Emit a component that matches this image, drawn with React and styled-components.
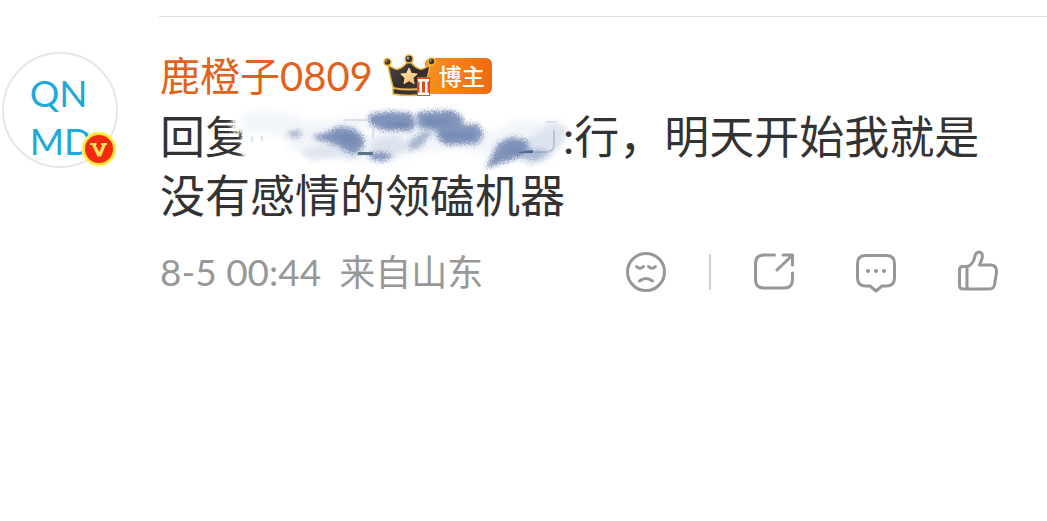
import React from "react";
import styled, { createGlobalStyle } from "styled-components";

const App = () => {
  return (
    <>
      <GlobalStyle />
      <Page>
        <Separator />
        <Comment>
          <AvatarLink href="#profile" aria-label="鹿橙子0809">
            <AvatarText>
              QN
              <br />
              MD
            </AvatarText>
            <VerifiedIcon />
          </AvatarLink>
          <Content>
            <Header>
              <UserName href="#profile">鹿橙子0809</UserName>
              <Badge>
                <CrownIcon />
                <BadgeLabel>博主</BadgeLabel>
              </Badge>
            </Header>
            <Message>
              回复
              <Smudge />
              :行，明天开始我就是没有感情的领磕机器
            </Message>
            <Footer>
              <Meta>
                <Time>8-5 00:44</Time>
                <span>来自山东</span>
              </Meta>
              <Actions>
                <IconButton type="button" aria-label="不喜欢">
                  <SadIcon />
                </IconButton>
                <ActionDivider />
                <ButtonGroup>
                  <IconButton type="button" aria-label="转发">
                    <ShareIcon />
                  </IconButton>
                  <IconButton type="button" aria-label="评论">
                    <CommentIcon />
                  </IconButton>
                  <IconButton type="button" aria-label="赞">
                    <LikeIcon />
                  </IconButton>
                </ButtonGroup>
              </Actions>
            </Footer>
          </Content>
        </Comment>
      </Page>
    </>
  );
};

const VerifiedIcon = () => (
  <VerifiedSvg viewBox="0 0 36 36" aria-hidden="true">
    <circle cx="18" cy="18" r="17.5" fill="#fff27a" />
    <circle cx="18" cy="18" r="16" fill="#ffe531" />
    <circle cx="18" cy="18" r="14" fill="#f42a0c" />
    <path
      d="M9 12h6.500v2h-1l3.800 7 3-7h-1.300v-2h6v2h-1.200L20 25.500h-3.500L11 14H9z"
      fill="#ffe45c"
    />
  </VerifiedSvg>
);

const CrownIcon = () => (
  <CrownSvg viewBox="0 0 54 44" aria-hidden="true">
    <defs>
      <linearGradient id="crown" x1="0" y1="0" x2="1" y2="1">
        <stop offset="0" stopColor="#55504b" />
        <stop offset="0.5" stopColor="#302c2b" />
        <stop offset="1" stopColor="#4b4441" />
      </linearGradient>
      <linearGradient id="star" x1="0" y1="0" x2="1" y2="1">
        <stop offset="0" stopColor="#fff3cf" />
        <stop offset="1" stopColor="#f7b255" />
      </linearGradient>
    </defs>
    <g stroke="#f6b73f" strokeWidth="1.5" strokeLinejoin="round">
      <path
        d="M5 11c4 2 7 5 10 4 5-1 8-5 11-9 3 4 6 8 11 9 3 1 6-2 10-4-1 8-3 15-5 22v7q-16 3-32 0v-7C8 26 6 19 5 11z"
        fill="url(#crown)"
      />
      <circle cx="4.500" cy="8" r="3.500" fill="#3b3734" />
      <circle cx="26" cy="5" r="4" fill="#3b3734" />
      <circle cx="48.500" cy="7.500" r="3.500" fill="#3b3734" />
    </g>
    <path d="M10 33q16 3 32 0v2q-16 3-32 0z" fill="#efb255" />
    <g fill="#b5aba2">
      <circle cx="3.500" cy="7" r="1" />
      <circle cx="25" cy="4" r="1.200" />
      <circle cx="47.500" cy="6.500" r="1" />
    </g>
    <path
      d="m26 14 2.400 5.400 5.800.6-4.300 4 1.200 5.700-5.100-3-5.100 3 1.200-5.700-4.300-4 5.800-.6z"
      fill="url(#star)"
      stroke="#ffd38a"
      strokeLinejoin="round"
    />
    <rect x="34" y="23" width="13" height="19" rx="1" fill="#d9501f" />
    <path
      d="M35 25h11v2.500h-1.500v11H46V41H35v-2.500h1.500v-11H35zm4 2.500v11h3v-11z"
      fill="#fff"
      fillRule="evenodd"
    />
  </CrownSvg>
);

// Brushed-out user name, drawn in place of the text
const Smudge = () => (
  <SmudgeSvg viewBox="0 0 313 59" aria-hidden="true">
    <defs>
      <filter id="soft" x="-20%" y="-40%" width="140%" height="180%">
        <feGaussianBlur stdDeviation="4" />
      </filter>
      <filter
        id="brush"
        x="-20%"
        y="-40%"
        width="140%"
        height="180%"
        colorInterpolationFilters="sRGB"
      >
        <feTurbulence
          type="fractalNoise"
          baseFrequency="0.7"
          numOctaves="2"
          seed="4"
          result="noise"
        />
        <feGaussianBlur in="SourceGraphic" stdDeviation="2" result="blur" />
        <feDisplacementMap
          in="blur"
          in2="noise"
          scale="9"
          xChannelSelector="R"
          yChannelSelector="G"
        />
      </filter>
    </defs>
    <path d="M-16 2H8v52H-8V24l-11-1z" fill="#fff" filter="url(#brush)" />
    <g fill="#f1f4f9" filter="url(#soft)">
      <path d="M-8 6Q15 0 45 7l10 10-10 11Q20 25-6 24z" />
      <path d="M20 14h50l40-6 10 12-50 18-40-8z" />
      <path d="M32 38Q75 24 115 34l14-18 70 4 20 14 50-22 38 2 8 12-15 16-42 10-54-13-80 15-52-4z" />
    </g>
    <g fill="#dae1ed" filter="url(#brush)" opacity="0.8">
      <path d="M50 44q20-10 50-5l-4 9-35 4z" />
      <path d="M92 50q7-12 24-12l-4 10-13 3z" />
      <path d="M120 32l25-5 20 12-20 8-24 1z" />
      <path d="M266 40l20-16 18-10 14 6-4 14-16 18-18 6-12-8z" />
    </g>
    <g
      fill="#8195bb"
      stroke="#8195bb"
      strokeWidth="2"
      strokeLinejoin="round"
      filter="url(#brush)"
    >
      <path d="M64 29q15-3 22-9 20-2 28 12l-3 8-8 6-15-9z" />
      <path d="M119 8q14-6 42-2l4 8-4 8-29-1-11-5z" />
      <path d="M168 5l34-2 11 8-4 7-22 4-18-3z" />
      <path d="M190 18l37-1 6 9-6 9-31 1-9-8z" />
      <path d="M249 36l13-6 14 3 4 12-19 6-24 8z" />
      <path d="M119 46l14-1 9 3-8 4-11-1z" />
    </g>
    <g fill="#a9b7d1" filter="url(#brush)">
      <path d="M36 25l12-3 5 4-9 5z" />
      <path d="M160 32l14-9 10 0-8 9-6 8-12 2z" />
      <path d="M275 43l16-2 8 4-13 8-12-3z" />
    </g>
    <g fill="#6880ad" opacity="0.6" filter="url(#brush)">
      <path d="M82 27l18-1 9 7-12 2z" />
      <path d="M134 14h22l4 5-23 1z" />
      <path d="M175 11h22l4 4-21 2z" />
      <path d="M193 25h30v5h-26z" />
      <path d="M256 41l14-3 3 4-14 4z" />
    </g>
    <path d="M108 44h15v3h-15z" fill="#5b7486" />
    <path d="M269 44l14-2v3h-14z" fill="#4c6492" />
    <path
      d="M284 44h12q8 0 8-8V22"
      fill="none"
      stroke="#8494b4"
      strokeWidth="2"
      opacity="0.4"
    />
    <path
      d="M2 28v6M12 28v5M123 20v10M93 12h26M296 14h11"
      stroke="#cdd3de"
      strokeWidth="2"
      opacity="0.6"
    />
  </SmudgeSvg>
);

const SadIcon = () => (
  <Icon viewBox="0 0 40 40" aria-hidden="true">
    <circle cx="20" cy="20" r="18.500" />
    <path d="M10.500 14.500q3.500 3.500 7 0M22.500 14.500q3.500 3.500 7 0M13.500 29q6.500-5 13 0" />
  </Icon>
);

const ShareIcon = () => (
  <Icon viewBox="0 0 40 40" aria-hidden="true">
    <path d="M20.500 3H10q-8.500 0-8.500 8.500v16q0 8.500 8.500 8.500h20q8.500 0 8.500-8.500v-6.500" />
    <path d="M29 3h9.500v10M38 3.500 23 18" />
  </Icon>
);

const CommentIcon = () => (
  <Icon viewBox="0 0 40 40" aria-hidden="true">
    <path d="M9.500 3.500h21q8 0 8 8v14.500q0 8-8 8H26l-6 5-6-5H9.500q-8 0-8-8V11.500q0-8 8-8z" />
    <g fill="#979797" stroke="none">
      <circle cx="12" cy="19" r="2" />
      <circle cx="20" cy="19" r="2" />
      <circle cx="28" cy="19" r="2" />
    </g>
  </Icon>
);

const LikeIcon = () => (
  <Icon viewBox="0 0 40 40" aria-hidden="true">
    <path d="M9 14.500H5q-3.500 0-3.500 3.500v15.500q0 3.500 3.500 3.500h26.500q4 0 5-4l2-12.500q.5-7-5-7.500H21.500l2.500-6.500q1.500-6-3-6.500-3 0-4 4-2 9.500-8 10.500zV37" />
  </Icon>
);

const GlobalStyle = createGlobalStyle`
  * {
    box-sizing: border-box;
  }

  body {
    margin: 0;
    background-color: #fff;
    font-family: Lato, "Noto Sans CJK SC", sans-serif;
  }
`;

const Page = styled.main`
  padding-top: 16px;
`;

const Separator = styled.hr`
  height: 1px;
  margin: 0 0 0 159px;
  border: 0;
  background-color: #dcdcdc;
`;

const Comment = styled.article`
  display: flex;
  align-items: flex-start;
  gap: 42px;
  padding: 35px 49px 24px 2px;
`;

const AvatarLink = styled.a`
  position: relative;
  display: flex;
  flex: none;
  align-items: center;
  justify-content: center;
  width: 116px;
  height: 116px;
  border: 2px solid #e6e6e6;
  border-radius: 50%;
  color: #1ea9d8;
  text-decoration: none;
`;

const AvatarText = styled.span`
  padding: 14px 0 0 2px;
  font-size: 37px;
  line-height: 48px;
`;

const VerifiedSvg = styled.svg`
  position: absolute;
  right: -1px;
  bottom: -1px;
  width: 36px;
  height: 36px;
`;

const Content = styled.div`
  flex: 1;
  min-width: 0;
`;

const Header = styled.header`
  display: flex;
  align-items: center;
  gap: 10px;
  padding-top: 2px;
`;

const UserName = styled.a`
  color: #e0621c;
  font-size: 40px;
  line-height: 44px;
  text-decoration: none;
`;

const Badge = styled.span`
  display: flex;
  align-items: center;
`;

const CrownSvg = styled.svg`
  z-index: 1;
  width: 54px;
  height: 44px;
`;

const BadgeLabel = styled.span`
  margin-left: -12px;
  padding: 0 7px 0 14px;
  border-radius: 6px;
  background: linear-gradient(90deg, #f5921f, #f26a0c);
  color: #fff;
  font-size: 23px;
  font-weight: 500;
  line-height: 36px;
`;

const Message = styled.p`
  margin: 10px 0 0;
  color: #333;
  font-size: 45px;
  line-height: 59px;
`;

const SmudgeSvg = styled.svg`
  width: 313px;
  height: 59px;
  overflow: visible;
  vertical-align: top;
`;

const Footer = styled.footer`
  display: flex;
  align-items: center;
  justify-content: space-between;
  margin-top: 26px;
`;

const Meta = styled.div`
  display: flex;
  align-items: baseline;
  gap: 18px;
  color: #979797;
  font-size: 36px;
  line-height: 40px;
`;

const Time = styled.time`
  font-size: 37px;
`;

const Actions = styled.div`
  display: flex;
  align-items: center;
  gap: 43px;
`;

const ButtonGroup = styled.div`
  display: flex;
  gap: 62px;
`;

const ActionDivider = styled.span`
  width: 2px;
  height: 36px;
  background-color: #d0d0d0;
`;

const IconButton = styled.button`
  display: flex;
  padding: 0;
  border: 0;
  background: none;
  cursor: pointer;
`;

const Icon = styled.svg`
  width: 40px;
  height: 40px;
  overflow: visible;
  fill: none;
  stroke: #979797;
  stroke-width: 3;
  stroke-linecap: round;
  stroke-linejoin: round;
`;

export default App;
